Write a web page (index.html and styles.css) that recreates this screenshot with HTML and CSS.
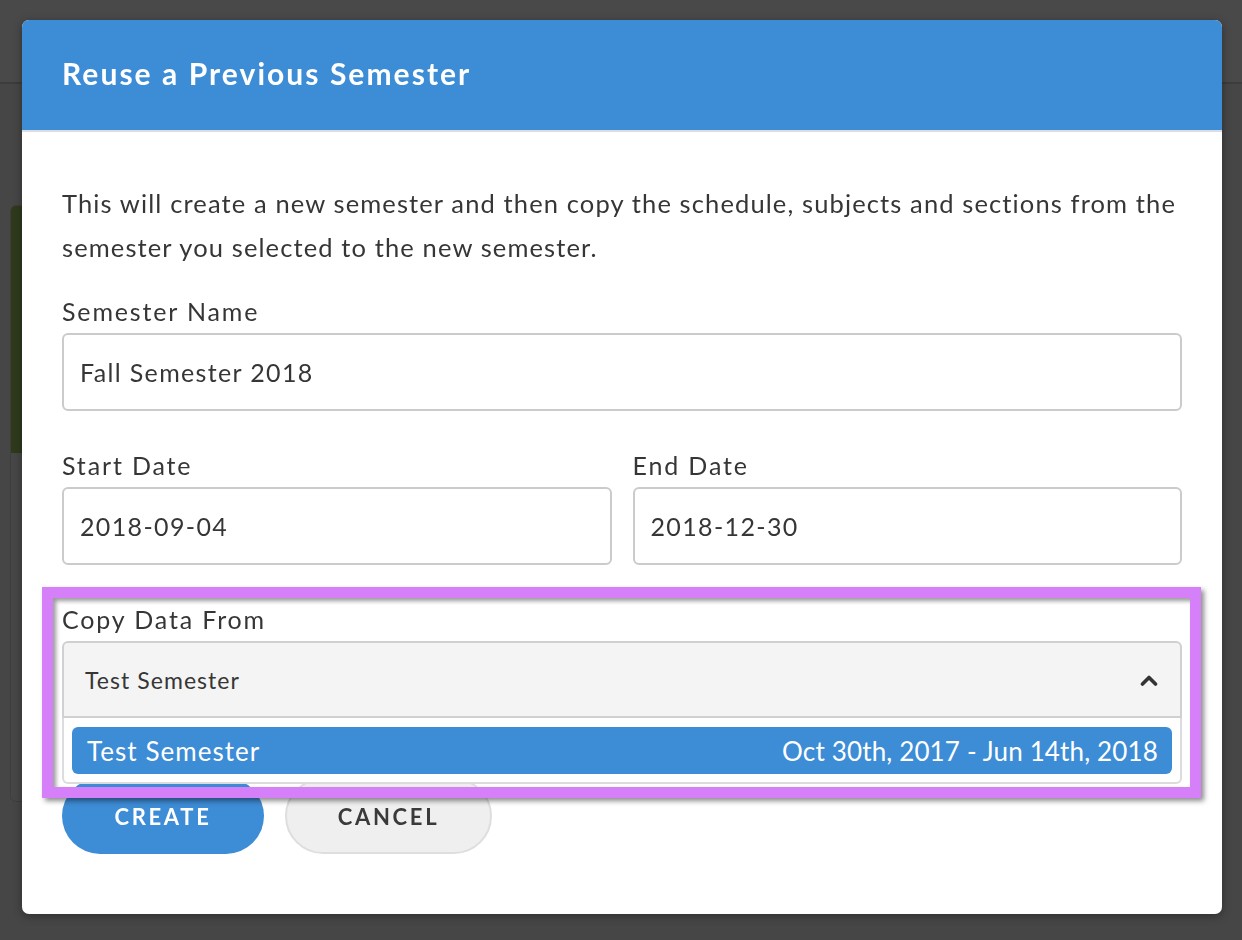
FILE: index.html
```html
<!DOCTYPE html>
<html>
<head>
<meta charset="utf-8">
<link rel="stylesheet" href="styles.css">
</head>
<body>
<div class="page">
  <div class="topbar"></div>
  <div class="bg-content">
    <div class="bg-card"><div class="bg-card-top"></div></div>
  </div>
</div>
<div class="modal">
  <div class="modal-header">
    <h1 class="modal-title">Reuse a Previous Semester</h1>
  </div>
  <div class="modal-body">
    <p class="intro">This will create a new semester and then copy the schedule, subjects and sections from the semester you selected to the new semester.</p>
    <div class="field">
      <label class="label">Semester Name</label>
      <div class="input">Fall Semester 2018</div>
    </div>
    <div class="row">
      <div class="field">
        <label class="label">Start Date</label>
        <div class="input">2018-09-04</div>
      </div>
      <div class="field">
        <label class="label">End Date</label>
        <div class="input">2018-12-30</div>
      </div>
    </div>
    <div class="field field-select">
      <label class="label">Copy Data From</label>
      <div class="select">
        <div class="select-control">
          <span class="select-value">Test Semester</span>
          <svg class="chevron" width="18" height="12" viewBox="0 0 18 12"><polyline points="2.5,10 9,3.5 15.5,10" fill="none" stroke="#333" stroke-width="3.6" stroke-linecap="round" stroke-linejoin="round"/></svg>
        </div>
        <div class="select-menu">
          <div class="option is-active">
            <span class="option-name">Test Semester</span>
            <span class="option-dates">Oct 30th, 2017 - Jun 14th, 2018</span>
          </div>
        </div>
      </div>
    </div>
    <div class="actions">
      <button class="btn btn-primary">CREATE</button>
      <button class="btn btn-secondary">CANCEL</button>
    </div>
  </div>
  <div class="highlight"></div>
</div>
</body>
</html>
```
FILE: styles.css
```css
html, body {
  margin: 0;
  padding: 0;
}
body {
  background: #464646;
  font-family: "Lato", "Liberation Sans", sans-serif;
  width: 1242px;
  height: 940px;
  overflow: hidden;
}
.page {
  height: 940px;
}
.topbar {
  height: 82px;
  background: #494949;
  border-bottom: 2px solid #3c3c3c;
}
.bg-content {
  padding: 121px 0 0 10px;
}
.bg-card {
  width: 300px;
  height: 595px;
  background: #474747;
  border: 1px solid #3e3e3e;
  border-radius: 6px;
  overflow: hidden;
}
.bg-card-top {
  height: 247px;
  background: #2f3a1c;
}

.modal {
  position: fixed;
  top: 20px;
  left: 22px;
  width: 1200px;
  height: 894px;
  background: #fff;
  border-radius: 7px;
  box-shadow: 0 2px 10px rgba(0,0,0,0.35);
}
.modal-header {
  height: 110px;
  background: #3d8cd6;
  border-bottom: 2px solid #d9dee2;
  border-radius: 7px 7px 0 0;
  display: flex;
  align-items: center;
  padding: 0 40px;
}
.modal-title {
  margin: 0;
  color: #fff;
  font-size: 30px;
  font-weight: 700;
  letter-spacing: 2.05px;
  position: relative;
  top: -2px;
}
.modal-body {
  padding: 49px 40px 60px;
  color: #363636;
}
.intro {
  margin: 0 0 27px;
  font-size: 25.5px;
  line-height: 44px;
  letter-spacing: 1.12px;
}
.field {
  display: flex;
  flex-direction: column;
  margin-bottom: 39px;
}
.label {
  font-size: 25px;
  line-height: 30px;
  margin-bottom: 7px;
  letter-spacing: 1.85px;
}
.input {
  height: 74px;
  border: 2px solid #cbcbcb;
  border-radius: 6px;
  display: flex;
  align-items: center;
  padding: 0 16px;
  font-size: 25px;
  letter-spacing: 1.35px;
}
.row {
  display: grid;
  grid-template-columns: 1fr 1fr;
  gap: 21px;
}
.row .field {
  margin-bottom: 39px;
}
.field-select {
  margin-bottom: 60px;
}
.select {
  position: relative;
}
.select-control {
  height: 73px;
  background: #f4f4f4;
  border: 2px solid #d0d0d0;
  border-radius: 6px 6px 0 0;
  display: flex;
  align-items: center;
  justify-content: space-between;
  padding: 0 22px 0 21px;
  font-size: 23px;
  letter-spacing: 1.05px;
}
.chevron {
  display: block;
}
.select-menu {
  position: absolute;
  left: 0;
  right: 0;
  top: 77px;
  background: #fff;
  border: 2px solid #dcdcdc;
  border-top: none;
  border-radius: 0 0 6px 6px;
  padding: 9px 8px 8px;
  z-index: 2;
}
.option {
  height: 47px;
  border-radius: 6px;
  background: #3d8cd6;
  color: #fff;
  display: flex;
  align-items: center;
  justify-content: space-between;
  padding: 0 14px 0 15px;
  font-size: 26px;
}
.option-name {
  letter-spacing: 1.05px;
}
.option-dates {
  letter-spacing: 0.15px;
}
.actions {
  display: flex;
  gap: 21px;
}
.btn {
  height: 76px;
  border-radius: 38px;
  font-family: "Lato", "Liberation Sans", sans-serif;
  font-size: 22px;
  font-weight: 700;
  letter-spacing: 2.7px;
  padding: 0;
  cursor: pointer;
}
.btn-primary {
  width: 202px;
  background: #3d8cd6;
  color: #fff;
  border: none;
}
.btn-secondary {
  width: 207px;
  background: #efefef;
  color: #3a3a3a;
  border: 2px solid #dedede;
}
.highlight {
  position: absolute;
  left: 20px;
  top: 567px;
  width: 1159px;
  height: 211px;
  box-sizing: border-box;
  border: 11px solid #d580f9;
  box-shadow: 3px 3px 5px rgba(0,0,0,0.45), inset 3px 3px 4px rgba(0,0,0,0.4);
  z-index: 3;
  pointer-events: none;
}
```
